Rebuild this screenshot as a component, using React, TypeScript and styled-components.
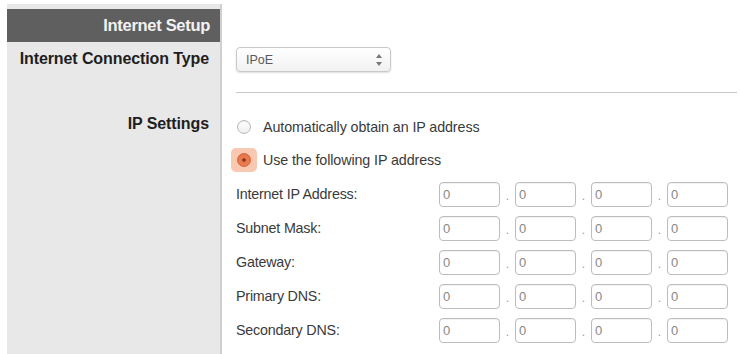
import React from "react";
import styled, { createGlobalStyle } from "styled-components";

const Global = createGlobalStyle`
  html, body { margin: 0; padding: 0; background: #ffffff; }
  body { font-family: "Liberation Sans", Arial, sans-serif; width: 740px; height: 354px; overflow: hidden; }
  * { box-sizing: border-box; }
`;

const Page = styled.div`
  display: flex;
  height: 354px;
`;

const Sidebar = styled.aside`
  margin-left: 7px;
  margin-top: 4px;
  width: 215px;
  background: #e8e8e8;
  border-right: 2px solid #cfcfcf;
  padding-top: 5px;
  display: flex;
  flex-direction: column;
`;

const SideHeader = styled.div`
  height: 33px;
  background: #5f5f5f;
  color: #f2f2f2;
  font-weight: bold;
  font-size: 16.5px;
  letter-spacing: -0.3px;
  display: flex;
  align-items: center;
  justify-content: flex-end;
  padding-right: 10px;
`;

const SideLabel = styled.div<{ $top: number }>`
  margin-top: ${(p) => p.$top}px;
  font-weight: bold;
  font-size: 16px;
  letter-spacing: -0.1px;
  line-height: 16px;
  color: #1e1e1e;
  text-align: right;
  padding-right: 11px;
`;

const Main = styled.main`
  flex: 1;
  padding-left: 14px;
  padding-right: 3px;
  display: flex;
  flex-direction: column;
`;

const Select = styled.div`
  margin-top: 47px;
  width: 155px;
  height: 25px;
  border: 1px solid #c9c9c9;
  border-radius: 4px;
  background: linear-gradient(#ffffff, #f1f1f1);
  box-shadow: 0 1px 2px rgba(0, 0, 0, 0.14);
  display: flex;
  align-items: center;
  justify-content: space-between;
  padding: 0 8px 0 9px;
  font-size: 12.5px;
  color: #5a5a5a;
`;

const Arrows = styled.span`
  display: flex;
  flex-direction: column;
  align-items: center;
  gap: 4px;
`;

const Divider = styled.hr`
  margin: 20px 0 0 0;
  border: none;
  border-top: 1px solid #c8c8c8;
  height: 0;
`;

const Options = styled.div`
  margin-top: 17px;
  display: flex;
  flex-direction: column;
`;

const RadioRow = styled.label<{ $h: number }>`
  height: ${(p) => p.$h}px;
  display: flex;
  align-items: center;
  font-size: 14.3px;
  letter-spacing: -0.1px;
  color: #3a3a3a;
`;

const RadioWrap = styled.span<{ $focus?: boolean }>`
  width: 26px;
  height: 24px;
  margin-left: -5px;
  margin-right: 6px;
  display: flex;
  align-items: center;
  justify-content: center;
  border-radius: 5px;
  background: ${(p) => (p.$focus ? "#f8c9b0" : "transparent")};
`;

const Radio = styled.span<{ $checked?: boolean }>`
  width: 14px;
  height: 14px;
  border-radius: 50%;
  border: 1px solid ${(p) => (p.$checked ? "#d9663d" : "#b9b9b9")};
  background: ${(p) =>
    p.$checked
      ? "radial-gradient(circle, #8a3a1e 0 1.5px, #ea7a4e 2px)"
      : "linear-gradient(#ffffff, #eeeeee)"};
  box-shadow: inset 0 1px 1px rgba(0, 0, 0, 0.08);
`;

const IpRow = styled.div`
  height: 34px;
  display: flex;
  align-items: center;
`;

const IpLabel = styled.span`
  width: 203px;
  font-size: 14.3px;
  letter-spacing: -0.2px;
  color: #3a3a3a;
`;

const Octet = styled.div`
  width: 61px;
  height: 25px;
  border: 1.5px solid #bdbdbd;
  border-radius: 4px;
  box-shadow: inset 0 1px 1px rgba(0, 0, 0, 0.06);
  display: flex;
  align-items: center;
  padding-left: 3px;
  font-size: 13px;
  color: #888;
`;

const Dot = styled.span`
  width: 15px;
  text-align: center;
  font-size: 12px;
  color: #9a9a9a;
  padding-top: 4px;
`;

const rows = ["Internet IP Address:", "Subnet Mask:", "Gateway:", "Primary DNS:", "Secondary DNS:"];

export default function App() {
  return (
    <>
      <Global />
      <Page>
        <Sidebar>
          <SideHeader>Internet Setup</SideHeader>
          <SideLabel $top={9}>Internet Connection Type</SideLabel>
          <SideLabel $top={49}>IP Settings</SideLabel>
        </Sidebar>
        <Main>
          <Select>
            <span>IPoE</span>
            <Arrows>
              <svg width="6" height="4" viewBox="0 0 6 4"><path d="M0 4 L3 0 L6 4 Z" fill="#777" /></svg>
              <svg width="6" height="4" viewBox="0 0 6 4"><path d="M0 0 L3 4 L6 0 Z" fill="#777" /></svg>
            </Arrows>
          </Select>
          <Divider />
          <Options>
            <RadioRow $h={33}>
              <RadioWrap>
                <Radio />
              </RadioWrap>
              Automatically obtain an IP address
            </RadioRow>
            <RadioRow $h={34}>
              <RadioWrap $focus>
                <Radio $checked />
              </RadioWrap>
              Use the following IP address
            </RadioRow>
            {rows.map((r) => (
              <IpRow key={r}>
                <IpLabel>{r}</IpLabel>
                <Octet>0</Octet>
                <Dot>.</Dot>
                <Octet>0</Octet>
                <Dot>.</Dot>
                <Octet>0</Octet>
                <Dot>.</Dot>
                <Octet>0</Octet>
              </IpRow>
            ))}
          </Options>
        </Main>
      </Page>
    </>
  );
}
